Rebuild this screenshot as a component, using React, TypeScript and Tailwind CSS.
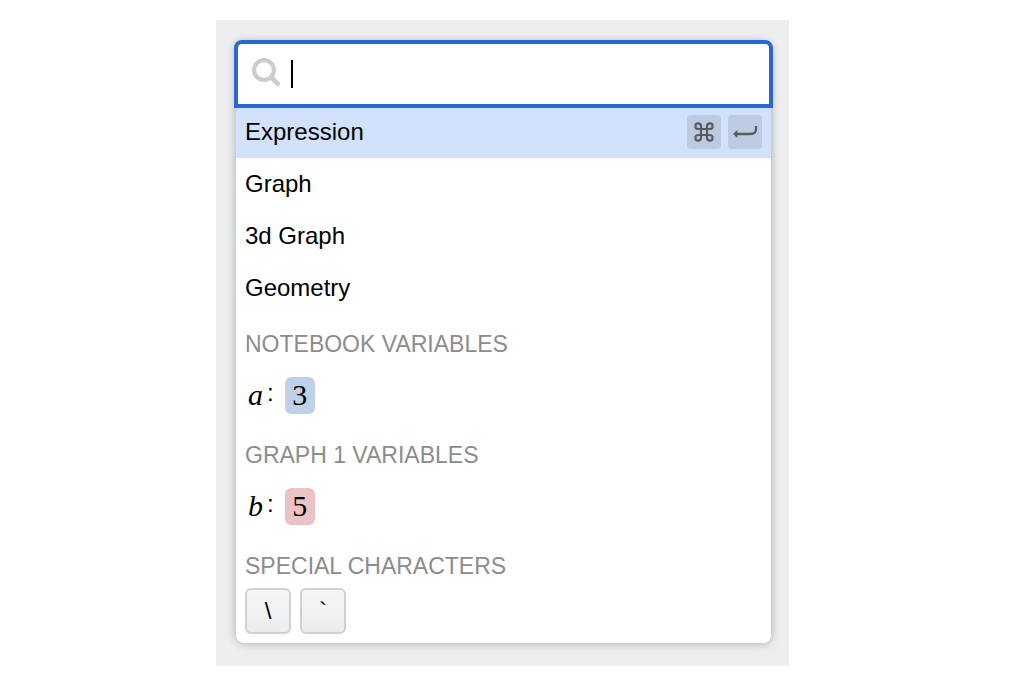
import React, { useState } from 'react';

interface Variable {
  name: string;
  value: string;
  chipClass: string;
}

interface VariableGroup {
  title: string;
  variables: Variable[];
}

const insertItems = ['Expression', 'Graph', '3d Graph', 'Geometry'];

const variableGroups: VariableGroup[] = [
  {
    title: 'NOTEBOOK VARIABLES',
    variables: [{ name: 'a', value: '3', chipClass: 'bg-[#bfd1e6]' }],
  },
  {
    title: 'GRAPH 1 VARIABLES',
    variables: [{ name: 'b', value: '5', chipClass: 'bg-[#ebc3c4]' }],
  },
];

const specialCharacters = ['\\', '`'];

const SearchIcon = () => (
  <svg className="mb-1 shrink-0" width="29" height="29" viewBox="0 0 29 29" fill="none" stroke="#cccccc" aria-hidden="true">
    <circle cx="12" cy="12" r="9.9" strokeWidth="4.2" />
    <path d="M19.5 19.5 25.8 25.8" strokeWidth="4.6" strokeLinecap="round" />
  </svg>
);

const CommandIcon = () => (
  <svg width="20" height="20" viewBox="0 0 20 20" fill="none" stroke="#5b5c5e" strokeWidth="2.2" aria-hidden="true">
    <path d="M7 7V4.2A2.8 2.8 0 1 0 4.2 7H15.8A2.8 2.8 0 1 0 13 4.2V15.8A2.8 2.8 0 1 0 15.8 13H4.2A2.8 2.8 0 1 0 7 15.8Z" />
  </svg>
);

const ReturnIcon = () => (
  <svg width="26" height="14" viewBox="0 0 26 14" fill="none" aria-hidden="true">
    <path d="M4 9H18.5Q24 9 24 4V1" stroke="#5b5c5e" strokeWidth="2.3" />
    <path d="M1 9 5.4 5V13Z" fill="#5b5c5e" />
  </svg>
);

const Key: React.FC<{ label: string; children: React.ReactNode }> = ({ label, children }) => (
  <kbd aria-label={label} className="flex h-[34px] w-[34px] items-center justify-center rounded bg-[#bccbe2]">
    {children}
  </kbd>
);

const GroupTitle: React.FC<{ children: React.ReactNode }> = ({ children }) => (
  <h2 className="flex h-[52px] items-center px-[9px] pt-2 text-[23px] text-[#8c8c8c]">{children}</h2>
);

export default function App() {
  const [query, setQuery] = useState('');
  const [selected, setSelected] = useState('Expression');

  return (
    <div className="flex min-h-screen items-start justify-center bg-white pt-5 pr-[27px] font-['Liberation_Sans',Arial,sans-serif] text-2xl text-black">
      <main className="w-full max-w-[573px] bg-[#edeef0] pt-[22px] pr-[18px] pb-[23px] pl-5">
        <div className="rounded-lg bg-white shadow-[0_0_10px_rgba(0,0,0,0.3)]">
          <div className="relative flex h-16 items-center rounded-t-md border-2 border-[#2b66d3] bg-white pl-3.5 ring-2 ring-[#2b66d3]">
            <SearchIcon />
            <span className="ml-2.5 h-7 w-0.5 shrink-0 bg-black" aria-hidden="true" />
            <input
              type="text"
              aria-label="Search"
              value={query}
              onChange={(e) => setQuery(e.target.value)}
              className="h-full min-w-0 flex-1 bg-transparent caret-transparent outline-none"
            />
          </div>

          <ul>
            {insertItems.map((item) => (
              <li key={item}>
                <button
                  type="button"
                  onClick={() => setSelected(item)}
                  className={`flex h-[52px] w-full items-center justify-between px-[9px] text-left ${
                    item === selected ? 'bg-[#d2e1fc]' : 'bg-white'
                  }`}
                >
                  <span>{item}</span>
                  {item === selected && (
                    <span className="flex gap-[7px]">
                      <Key label="Command"><CommandIcon /></Key>
                      <Key label="Return"><ReturnIcon /></Key>
                    </span>
                  )}
                </button>
              </li>
            ))}
          </ul>

          {variableGroups.map((group) => (
            <section key={group.title}>
              <GroupTitle>{group.title}</GroupTitle>
              {group.variables.map((variable) => (
                <button
                  key={variable.name}
                  type="button"
                  className="flex h-[59px] w-full items-center px-3 text-left"
                >
                  <span className="pb-0.5 font-['Liberation_Serif',serif] text-3xl italic">{variable.name}</span>
                  <span className="ml-1 pb-1.5">:</span>
                  <span
                    className={`ml-[11px] flex h-[37px] w-[30px] items-center justify-center rounded-md pb-0.5 font-['Liberation_Serif',serif] text-3xl ${variable.chipClass}`}
                  >
                    {variable.value}
                  </span>
                </button>
              ))}
            </section>
          ))}

          <section>
            <GroupTitle>SPECIAL CHARACTERS</GroupTitle>
            <div className="flex gap-[9px] px-[9px] pb-[9px]">
              {specialCharacters.map((character) => (
                <button
                  key={character}
                  type="button"
                  className="flex h-[46px] w-[46px] items-center justify-center rounded-md border-2 border-[#d0d1d2] bg-linear-to-b from-[#f5f5f5] to-[#eaedef]"
                >
                  {character}
                </button>
              ))}
            </div>
          </section>
        </div>
      </main>
    </div>
  );
}
